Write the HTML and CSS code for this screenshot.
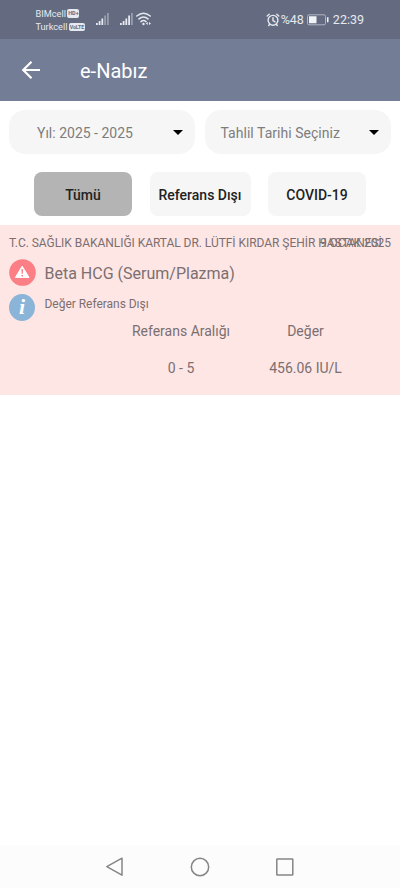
FILE: index.html
```html
<!DOCTYPE html>
<html lang="tr">
<head>
<meta charset="utf-8">
<meta name="viewport" content="width=device-width">
<title>e-Nabız</title>
<link rel="stylesheet" href="styles.css">
</head>
<body>
<div class="status">
  <div class="carriers">
    <div class="carrier"><span>BIMcell</span><span class="badge">HD+</span></div>
    <div class="carrier"><span>Turkcell</span><span class="badge badge-volte">VoLTE</span></div>
  </div>
  <svg class="signals" width="58" height="16" viewBox="0 0 58 16" fill="#e6e9f0">
    <path d="M1 12h1.800v2H1zM3.700 10h1.800v4H3.700zM6.400 7.500h1.800V14H6.400z"/>
    <path opacity=".4" d="M9.200 4.500H11V14H9.200zM12 2h1.800v12H12z"/>
    <path d="M25 12h1.800v2H25zM27.700 10h1.800v4h-1.800zM30.400 7.500h1.800V14h-1.800zM33.200 4.500H35V14h-1.800z"/>
    <path opacity=".4" d="M36 2h1.800v12H36z"/>
    <g fill="none" stroke="#e6e9f0" stroke-width="1.500" stroke-linecap="round"><path d="M41.800 5Q48.500-.6 55.200 5M44 7.900q4.500-3.700 9 0M46 10.600q2.500-2 5 0"/></g>
    <circle cx="48.500" cy="13" r="1.200"/><path d="M50.800 12.500l2-1.600v3.200zM56 12.500l-2-1.600v3.200z"/>
  </svg>
  <div class="status-right">
    <svg width="14" height="14" viewBox="0 0 14 14" fill="none" stroke="#e6e9f0" stroke-width="1.400" stroke-linecap="round"><circle cx="7" cy="7.300" r="4.900"/><path d="M7 4.600v3l2 1.200M1.200 3l2-1.700M12.800 3l-2-1.700M3.700 11.300l-1 1.200M10.300 11.300l1 1.200"/></svg>
    <span class="percent">%48</span>
    <svg class="battery" width="22" height="12" viewBox="0 0 22 12"><rect x=".5" y=".8" width="18" height="10" rx="1.500" fill="none" stroke="#aeb4c2"/><path fill="#f2f3f6" d="M2 2.300h7.500v7H2zM20 3.300h1.500v5H20z"/></svg>
    <span class="clock">22:39</span>
  </div>
</div>
<header class="appbar">
  <svg width="20" height="20" viewBox="0 0 20 20" fill="none" stroke="#fff" stroke-width="2.200"><path d="M19 10H2.500M10.500 1.700L2.200 10l8.300 8.300"/></svg>
  <h1 class="title">e-Nabız</h1>
</header>
<div class="selects">
  <div class="select select-year"><span>Yıl: 2025 - 2025</span><i class="caret"></i></div>
  <div class="select select-date"><span>Tahlil Tarihi Seçiniz</span><i class="caret"></i></div>
</div>
<div class="filters">
  <button class="filter filter-active">Tümü</button>
  <button class="filter filter-wide">Referans Dışı</button>
  <button class="filter">COVID-19</button>
</div>
<main class="card">
  <div class="source"><span class="hospital">T.C. SAĞLIK BAKANLIĞI KARTAL DR. LÜTFİ KIRDAR ŞEHİR HASTANESİ</span><span class="date">9 OCAK 2025</span></div>
  <div class="test">
    <svg width="27" height="27" viewBox="0 0 27 27"><circle cx="13.500" cy="13.500" r="13.300" fill="#fb7f84"/><path d="M13.200 7.200l6.800 11.200H6.400z" fill="#fff" stroke="#fff" stroke-width="1" stroke-linejoin="round"/><path d="M12.400 10.200h1.700l-.3 4.500h-1.100zM12.500 15.900h1.500v1.500h-1.500z" fill="#f17f84"/></svg>
    <span class="test-name">Beta HCG (Serum/Plazma)</span>
  </div>
  <div class="note">
    <span class="info">i</span>
    <span class="note-text">Değer Referans Dışı</span>
  </div>
  <div class="values">
    <span class="range-label">Referans Aralığı</span><span class="value-label">Değer</span>
    <span class="range">0 - 5</span><span class="value">456.06 IU/L</span>
  </div>
</main>
<nav class="navbar">
  <svg width="20" height="20" viewBox="0 0 20 20" fill="none" stroke="#858585" stroke-width="1.500" stroke-linejoin="round"><path d="M17 1.200v17L1.800 9.700z"/></svg>
  <svg width="20" height="20" viewBox="0 0 20 20" fill="none" stroke="#858585" stroke-width="1.500"><circle cx="10" cy="10" r="8.700"/></svg>
  <svg width="20" height="20" viewBox="0 0 20 20" fill="none" stroke="#858585" stroke-width="1.500"><rect x="1.800" y="2" width="16" height="16" rx=".6"/></svg>
</nav>
</body>
</html>
```
FILE: styles.css
```css
* { box-sizing: border-box; }
body {
  margin: 0;
  height: 888px;
  display: flex;
  flex-direction: column;
  background: #fff;
  color: #7b6f70;
  font-family: Roboto, "Liberation Sans", sans-serif;
  overflow: hidden;
  white-space: nowrap;
}
svg { display: block; flex: none; }
.status {
  height: 39px;
  flex: none;
  display: flex;
  align-items: flex-start;
  background: #646b80;
  color: #e6e9f0;
  padding: 7px 36px 0 35.500px;
}
.carriers { width: 59.500px; font-size: 9.200px; line-height: 13px; }
.carrier { display: flex; align-items: center; gap: 1.500px; }
.badge {
  width: 12px;
  height: 9px;
  border-radius: 2px;
  background: #e6e9f0;
  color: #646b80;
  font-size: 5.500px;
  font-weight: 700;
  line-height: 9px;
  text-align: center;
}
.badge-volte { width: 16px; height: 8px; line-height: 8px; font-size: 5.200px; }
.signals { margin-top: 4px; }
.status-right { margin-left: auto; height: 25px; display: flex; align-items: center; font-size: 12.500px; }
.percent { margin-left: 1px; }
.battery { margin: 0 4px 0 3px; }
.appbar {
  height: 62px;
  flex: none;
  display: flex;
  align-items: center;
  padding: 0 0 0 21px;
  background: #747d96;
}
.title { margin: 2px 0 0 39px; font-size: 20px; font-weight: 400; color: #fff; }
.selects { display: flex; justify-content: space-between; padding: 9px 9px 0; }
.select {
  width: 186px;
  height: 44px;
  display: flex;
  align-items: center;
  justify-content: space-between;
  border-radius: 16px;
  background: #f6f6f6;
  color: #7d7d7d;
  font-size: 14px;
}
.select span { padding-top: 1px; }
.select-year { padding: 0 12px 0 28px; }
.select-date { padding: 0 12px 0 15.500px; letter-spacing: .03px; }
.caret { border: 5.500px solid transparent; border-top: 5.500px solid #000; border-bottom: 0; }
.filters { display: flex; gap: 17.500px; padding: 18px 0 9px 34px; }
.filter {
  width: 98px;
  height: 44px;
  padding: 2px 0 0;
  border: 0;
  border-radius: 8px;
  background: #f6f6f6;
  color: #222;
  font: 500 14px Roboto, sans-serif;
}
.filter-wide { width: 101px; }
.filter-active { background: #b4b4b4; }
.card { height: 170px; flex: none; padding: 8px 9px 0; background: #fee6e5; }
.source { display: grid; height: 18px; align-items: center; font-size: 12px; }
.hospital, .date { grid-area: 1 / 1; padding-top: 2px; }
.hospital { letter-spacing: -.045px; }
.date { justify-self: end; }
.test { display: flex; align-items: center; height: 27px; margin-top: 8px; gap: 8.500px; }
.test-name { font-size: 16px; padding-top: 1px; }
.note { display: flex; margin-top: 8px; gap: 9.500px; }
.info {
  width: 26px;
  height: 27px;
  border-radius: 50%;
  background: #8bb5d8;
  color: #fff;
  font: italic 700 22px/26px "Liberation Serif", serif;
  text-align: center;
}
.note-text { font-size: 12px; line-height: 21px; letter-spacing: -.03px; }
.values { display: grid; grid-template-columns: 124px 125px; grid-auto-rows: 37.500px; margin: -9px 0 0 110px; text-align: center; align-items: center; font-size: 14px; }
.navbar { margin-top: auto; height: 43px; display: flex; justify-content: center; gap: 65px; align-items: center; background: #fcfcfc; }
```
